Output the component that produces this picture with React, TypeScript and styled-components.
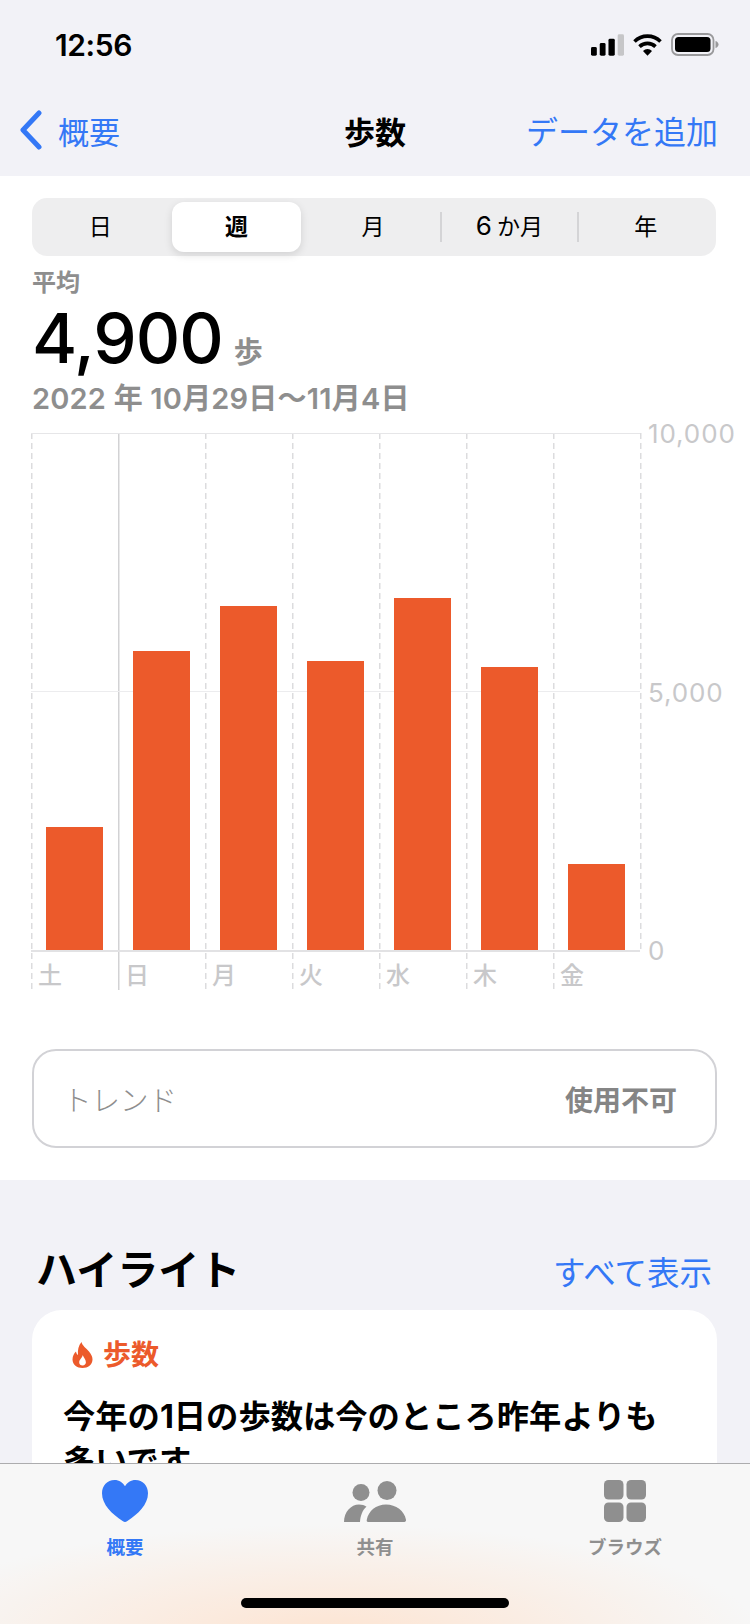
import React from "react";
import styled, { createGlobalStyle } from "styled-components";

const BLUE = "#3478f6";
const ORANGE = "#ec5a2b";
const GRAY = "#8e8e8e";
const AXIS = "#c8c8ca";

const GlobalStyle = createGlobalStyle`
  html, body {
    margin: 0;
    padding: 0;
    background: #fff;
  }
  * {
    box-sizing: border-box;
  }
  body {
    font-family: Inter, "Noto Sans CJK JP", sans-serif;
  }
`;

const Phone = styled.div`
  width: 750px;
  height: 1624px;
  display: flex;
  flex-direction: column;
  overflow: hidden;
  background: #f2f2f7;
`;

const StatusBar = styled.div`
  height: 88px;
  flex: none;
  padding: 28px 31px 0 55px;
  display: flex;
  justify-content: space-between;
  align-items: flex-start;
`;

const Clock = styled.div`
  font-size: 30px;
  line-height: 34px;
  font-weight: 600;
  color: #000;
  letter-spacing: -0.4px;
`;

const StatusIcons = styled.div`
  display: flex;
  align-items: center;
  gap: 9px;
  padding-top: 5px;
`;

const NavBar = styled.div`
  height: 84px;
  margin-bottom: 4px;
  flex: none;
  display: grid;
  grid-template-columns: 1fr auto 1fr;
  align-items: center;
  padding: 0 32px;
`;

const BackLink = styled.div`
  display: flex;
  align-items: center;
  gap: 15px;
  margin-left: -13px;
  color: ${BLUE};
  font-size: 31px;
`;

const NavTitle = styled.div`
  font-size: 31px;
  font-weight: 700;
  color: #000;
`;

const NavAction = styled.div`
  justify-self: end;
  font-size: 32px;
  color: ${BLUE};
  white-space: nowrap;
`;

const Content = styled.div`
  flex: 1;
  min-height: 0;
  overflow: hidden;
`;

const Summary = styled.section`
  height: 1004px;
  background: #fff;
  padding: 22px 33px 0 32px;
`;

const Segments = styled.div`
  width: 684px;
  height: 58px;
  display: flex;
  align-items: center;
  padding-right: 2px;
  background: #eeeeef;
  border-radius: 15px;
`;

const Segment = styled.div<{ $active?: boolean; $divider?: boolean }>`
  position: relative;
  flex: 1;
  height: 50px;
  margin: 0 4px;
  padding-bottom: 4px;
  display: flex;
  align-items: center;
  justify-content: center;
  font-size: 23px;
  font-weight: ${(p) => (p.$active ? 700 : 400)};
  color: #000;
  border-radius: 12px;
  background: ${(p) => (p.$active ? "#fff" : "transparent")};
  box-shadow: ${(p) => (p.$active ? "0 3px 8px rgba(0,0,0,0.12)" : "none")};

  &::before {
    content: "";
    display: ${(p) => (p.$divider ? "block" : "none")};
    position: absolute;
    left: -5px;
    top: 10px;
    bottom: 10px;
    width: 2px;
    background: #d4d4d6;
  }
`;

const SegmentDigit = styled.span`
  font-size: 26px;
  margin-right: 5px;
`;

const AverageLabel = styled.div`
  margin-top: 14px;
  font-size: 24px;
  line-height: 26px;
  font-weight: 600;
  color: ${GRAY};
`;

const AverageRow = styled.div`
  display: flex;
  align-items: baseline;
  gap: 11px;
  height: 76px;
  margin-top: 4px;
`;

const AverageValue = styled.div`
  font-size: 69px;
  line-height: 76px;
  font-weight: 500;
  color: #000;
  letter-spacing: -1px;
`;

const AverageUnit = styled.div`
  font-size: 29px;
  font-weight: 600;
  color: ${GRAY};
`;

const DateRange = styled.div`
  margin-top: 5px;
  font-size: 29px;
  line-height: 36px;
  font-weight: 600;
  color: ${GRAY};
  white-space: nowrap;
  letter-spacing: 0.2px;
  font-feature-settings: "palt";
`;

const Chart = styled.div`
  position: relative;
  margin: 16px 0 0 -1px;
  display: flex;
  width: 710px;
`;

const Column = styled.div<{ $solid?: boolean }>`
  width: 87px;
  height: 557px;
  display: flex;
  flex-direction: column;
  background-image: ${(p) =>
    p.$solid
      ? "linear-gradient(#d2d2d4, #d2d2d4)"
      : "repeating-linear-gradient(to bottom, #dcdcde 0 6px, transparent 6px 10px)"};
  background-size: 1.5px 100%;
  background-repeat: no-repeat;
`;

const Plot = styled.div`
  height: 519px;
  display: flex;
  align-items: flex-end;
  padding-left: 15px;
  border-top: 1.5px solid #e6e6e8;
  border-bottom: 2px solid #e2e2e4;
`;

const Bar = styled.div<{ $height: number }>`
  position: relative;
  z-index: 1;
  width: 57px;
  height: ${(p) => p.$height}px;
  background: ${ORANGE};
`;

const DayLabel = styled.div`
  padding: 10px 0 0 7px;
  font-size: 24px;
  line-height: 28px;
  font-weight: 500;
  color: ${AXIS};
`;

const EndColumn = styled.div`
  width: 96px;
  background-image: repeating-linear-gradient(to bottom, #dcdcde 0 6px, transparent 6px 10px);
  background-size: 1.5px 100%;
  background-repeat: no-repeat;
  display: flex;
  flex-direction: column;
  justify-content: space-between;
  height: 519px;
  padding-left: 8px;
  margin-bottom: 38px;
`;

const AxisLabel = styled.div`
  height: 28px;
  margin: -13px 0;
  font-size: 26px;
  line-height: 28px;
  color: ${AXIS};
  letter-spacing: 0.9px;
`;

const MidLine = styled.div`
  position: absolute;
  left: 0;
  top: 258px;
  width: 609px;
  height: 1px;
  background: #ececee;
`;

const TrendBox = styled.div`
  margin-top: 59px;
  width: 685px;
  height: 99px;
  border: 2px solid #d2d2d6;
  border-radius: 24px;
  display: flex;
  align-items: center;
  justify-content: space-between;
  padding: 0 38px 0 29px;
  font-size: 28px;
`;

const TrendLabel = styled.div`
  color: ${GRAY};
  font-size: 28.5px;
  font-weight: 300;
`;

const TrendValue = styled.div`
  color: #858585;
  font-weight: 700;
`;

const Highlights = styled.section`
  padding: 54px 33px 0 32px;
`;

const HighlightsHeader = styled.div`
  display: flex;
  justify-content: space-between;
  align-items: center;
  height: 65px;
  margin-bottom: 11px;
  padding: 0 5px;
`;

const HighlightsTitle = styled.h2`
  margin: 0;
  font-size: 41px;
  font-weight: 700;
  color: #000;
  margin-left: -1px;
`;

const ShowAll = styled.div`
  font-size: 32.5px;
  color: ${BLUE};
  padding-top: 7px;
`;

const Card = styled.div`
  width: 685px;
  height: 260px;
  background: #fff;
  border-radius: 30px;
  padding: 29px 31px;
`;

const CardTag = styled.div`
  display: flex;
  align-items: center;
  gap: 10px;
  padding-left: 9px;
  color: ${ORANGE};
  font-size: 28px;
  font-weight: 700;
  line-height: 32px;
`;

const CardText = styled.p`
  margin: 23px 0 0;
  font-size: 32.3px;
  line-height: 45px;
  font-weight: 700;
  color: #000;
  width: 622px;
`;

const TabBar = styled.nav`
  height: 161px;
  flex: none;
  position: relative;
  border-top: 1.5px solid #acacae;
  display: grid;
  grid-template-columns: 250px 250px 250px;
  background:
    radial-gradient(ellipse 430px 110px at 330px 170px, rgba(255, 222, 198, 0.75), rgba(255, 222, 198, 0)),
    #f7f7f7;
`;

const Tab = styled.div<{ $active?: boolean }>`
  display: flex;
  flex-direction: column;
  align-items: center;
  padding-top: 14px;
  color: ${(p) => (p.$active ? BLUE : "#8f8f8f")};
`;

const TabIcon = styled.div`
  height: 46px;
  display: flex;
  align-items: center;
  justify-content: center;
`;

const TabLabel = styled.div`
  margin-top: 10px;
  font-size: 18.5px;
  line-height: 26px;
  font-weight: 700;
`;

const HomeIndicator = styled.div`
  position: absolute;
  left: 241px;
  bottom: 16px;
  width: 268px;
  height: 10px;
  border-radius: 5px;
  background: #000;
`;

const SignalIcon = () => (
  <svg width="33" height="22" viewBox="0 0 34 22">
    <rect x="0" y="13" width="6" height="9" rx="1.5" fill="#000" />
    <rect x="9" y="9" width="6" height="13" rx="1.5" fill="#000" />
    <rect x="18" y="4.5" width="6.5" height="17.5" rx="1.5" fill="#000" />
    <rect x="27.5" y="0" width="6.5" height="22" rx="1.5" fill="#c6c6c8" />
  </svg>
);

const WifiIcon = () => (
  <svg width="29" height="22" viewBox="0 0 29 22">
    <path d="M1.5 7.5A18.5 18.5 0 0 1 27.5 7.5" fill="none" stroke="#000" strokeWidth="3.6" />
    <path d="M6.5 12.6A11.5 11.5 0 0 1 22.5 12.6" fill="none" stroke="#000" strokeWidth="3.6" />
    <path d="M10 17L14.5 21.8L19 17A6.3 6.3 0 0 0 10 17Z" fill="#000" />
  </svg>
);

const BatteryIcon = () => (
  <svg width="48" height="23" viewBox="0 0 48 23">
    <rect x="1" y="1" width="41.5" height="21" rx="6" fill="none" stroke="#9a9a9c" strokeWidth="1.8" />
    <rect x="4" y="4" width="35.5" height="15" rx="3.5" fill="#000" />
    <path d="M44.5 8C46.5 8.6 47.5 10 47.5 11.5S46.5 14.4 44.5 15Z" fill="#9a9a9c" />
  </svg>
);

const ChevronIcon = () => (
  <svg width="24" height="40" viewBox="0 0 24 40">
    <path d="M20 3L4 20L20 37" fill="none" stroke={BLUE} strokeWidth="5" strokeLinecap="round" strokeLinejoin="round" />
  </svg>
);

const FlameIcon = () => (
  <svg width="21" height="26" viewBox="0 0 21 26" fillRule="evenodd">
    <path
      fill={ORANGE}
      d="M9.5 0C10.5 4 14 6 17 9.5C19.5 12.5 20.5 15 20.5 17.5C20.5 22.5 16 26 10.5 26C5 26 .5 22.5 .5 17.5C.5 14 2 11.5 4 9.5C4.3 11.3 5 12.3 6 13C5.5 8 6.5 3.5 9.5 0ZM10.7 13C10.6 15.5 7.2 17.5 7.2 20.3C7.2 22.4 8.7 23.5 10.6 23.5C12.5 23.5 13.9 22.3 13.9 20.3C13.9 17.5 11.5 15.5 10.7 13Z"
    />
  </svg>
);

const HeartIcon = () => (
  <svg width="46" height="42" viewBox="0 0 46 42">
    <path
      fill="currentColor"
      d="M23 42C22.3 42 21.6 41.6 20.6 41C10 34.3 0 24.5 0 13.3C0 5.5 5.3 0 12.5 0C17.2 0 20.9 2.5 23 6.3C25.1 2.5 28.8 0 33.5 0C40.7 0 46 5.5 46 13.3C46 24.5 36 34.3 25.4 41C24.4 41.6 23.7 42 23 42Z"
    />
  </svg>
);

const PeopleIcon = () => (
  <svg width="62" height="42" viewBox="0 0 62 42">
    <circle cx="17" cy="12.5" r="8.5" fill="currentColor" />
    <circle cx="43" cy="10.5" r="9.5" fill="currentColor" />
    <path fill="currentColor" d="M0 42C0 32 7 24.5 15 24.5C18 24.5 20.5 25.3 22.5 26.8C18.5 30.1 16.5 35.5 16 42Z" />
    <path fill="currentColor" d="M24 42C22.8 42 22.5 41 22.8 39.8C24.5 31 32 24.5 42 24.5C52 24.5 60.5 31 62 39.8C62.2 41 61.5 42 60.5 42Z" />
  </svg>
);

const GridIcon = () => (
  <svg width="42" height="42" viewBox="0 0 42 42">
    <rect x="0" y="0" width="19.5" height="19.5" rx="4.5" fill="currentColor" />
    <rect x="22.5" y="0" width="19.5" height="19.5" rx="4.5" fill="currentColor" />
    <rect x="0" y="22.5" width="19.5" height="19.5" rx="4.5" fill="currentColor" />
    <rect x="22.5" y="22.5" width="19.5" height="19.5" rx="4.5" fill="currentColor" />
  </svg>
);

const days = [
  { label: "土", height: 123 },
  { label: "日", height: 299 },
  { label: "月", height: 344 },
  { label: "火", height: 289 },
  { label: "水", height: 352 },
  { label: "木", height: 283 },
  { label: "金", height: 86 },
];

const App: React.FC = () => {
  return (
    <Phone>
      <GlobalStyle />
      <StatusBar>
        <Clock>12:56</Clock>
        <StatusIcons>
          <SignalIcon />
          <WifiIcon />
          <BatteryIcon />
        </StatusIcons>
      </StatusBar>
      <NavBar>
        <BackLink>
          <ChevronIcon />
          概要
        </BackLink>
        <NavTitle>歩数</NavTitle>
        <NavAction>データを追加</NavAction>
      </NavBar>
      <Content>
        <Summary>
          <Segments>
            <Segment>日</Segment>
            <Segment $active>週</Segment>
            <Segment>月</Segment>
            <Segment $divider>
              <SegmentDigit>6</SegmentDigit>か月
            </Segment>
            <Segment $divider>年</Segment>
          </Segments>
          <AverageLabel>平均</AverageLabel>
          <AverageRow>
            <AverageValue>4,900</AverageValue>
            <AverageUnit>歩</AverageUnit>
          </AverageRow>
          <DateRange>2022 年 10月29日〜11月4日</DateRange>
          <Chart>
            {days.map((day, i) => (
              <Column key={day.label} $solid={i === 1}>
                <Plot>
                  <Bar $height={day.height} />
                </Plot>
                <DayLabel>{day.label}</DayLabel>
              </Column>
            ))}
            <EndColumn>
              <AxisLabel>10,000</AxisLabel>
              <AxisLabel>5,000</AxisLabel>
              <AxisLabel>0</AxisLabel>
            </EndColumn>
            <MidLine />
          </Chart>
          <TrendBox>
            <TrendLabel>トレンド</TrendLabel>
            <TrendValue>使用不可</TrendValue>
          </TrendBox>
        </Summary>
        <Highlights>
          <HighlightsHeader>
            <HighlightsTitle>ハイライト</HighlightsTitle>
            <ShowAll>すべて表示</ShowAll>
          </HighlightsHeader>
          <Card>
            <CardTag>
              <FlameIcon />
              歩数
            </CardTag>
            <CardText>今年の1日の歩数は今のところ昨年よりも多いです。</CardText>
          </Card>
        </Highlights>
      </Content>
      <TabBar>
        <Tab $active>
          <TabIcon>
            <HeartIcon />
          </TabIcon>
          <TabLabel>概要</TabLabel>
        </Tab>
        <Tab>
          <TabIcon>
            <PeopleIcon />
          </TabIcon>
          <TabLabel>共有</TabLabel>
        </Tab>
        <Tab>
          <TabIcon>
            <GridIcon />
          </TabIcon>
          <TabLabel>ブラウズ</TabLabel>
        </Tab>
        <HomeIndicator />
      </TabBar>
    </Phone>
  );
};

export default App;
